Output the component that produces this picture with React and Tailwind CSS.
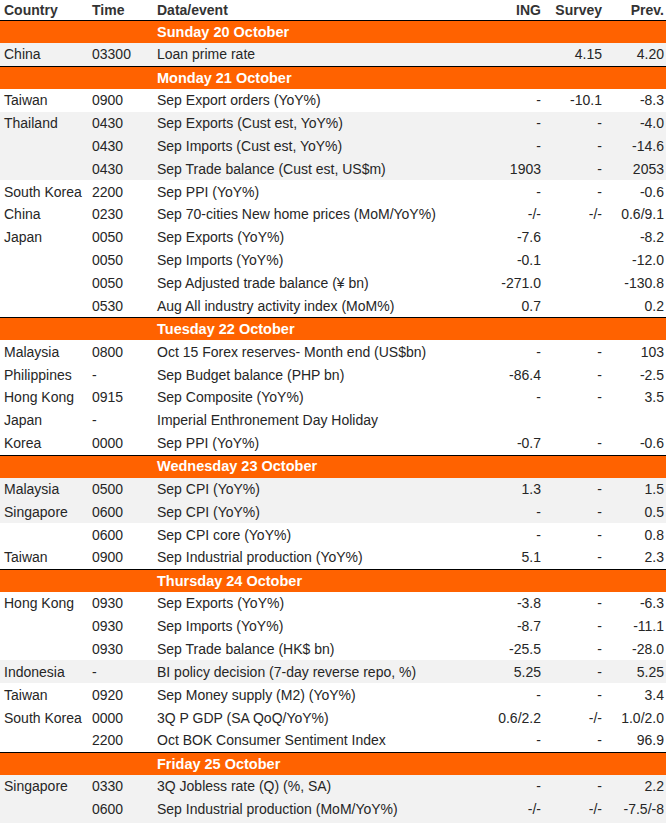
const days = [
  {
    title: "Sunday 20 October",
    rows: [["China", "03300", "Loan prime rate", "", "4.15", "4.20", true]],
  },
  {
    title: "Monday 21 October",
    rows: [
      ["Taiwan", "0900", "Sep Export orders (YoY%)", "-", "-10.1", "-8.3", false],
      ["Thailand", "0430", "Sep Exports (Cust est, YoY%)", "-", "-", "-4.0", true],
      ["", "0430", "Sep Imports (Cust est, YoY%)", "-", "-", "-14.6", true],
      ["", "0430", "Sep Trade balance (Cust est, US$m)", "1903", "-", "2053", true],
      ["South Korea", "2200", "Sep PPI (YoY%)", "-", "-", "-0.6", false],
      ["China", "0230", "Sep 70-cities New home prices (MoM/YoY%)", "-/-", "-/-", "0.6/9.1", false],
      ["Japan", "0050", "Sep Exports (YoY%)", "-7.6", "", "-8.2", false],
      ["", "0050", "Sep Imports (YoY%)", "-0.1", "", "-12.0", false],
      ["", "0050", "Sep Adjusted trade balance (¥ bn)", "-271.0", "", "-130.8", false],
      ["", "0530", "Aug All industry activity index (MoM%)", "0.7", "", "0.2", false],
    ],
  },
  {
    title: "Tuesday 22 October",
    rows: [
      ["Malaysia", "0800", "Oct 15 Forex reserves- Month end (US$bn)", "-", "-", "103", false],
      ["Philippines", "-", "Sep Budget balance (PHP bn)", "-86.4", "-", "-2.5", false],
      ["Hong Kong", "0915", "Sep Composite (YoY%)", "-", "-", "3.5", false],
      ["Japan", "-", "Imperial Enthronement Day Holiday", "", "", "", false],
      ["Korea", "0000", "Sep PPI (YoY%)", "-0.7", "-", "-0.6", false],
    ],
  },
  {
    title: "Wednesday 23 October",
    rows: [
      ["Malaysia", "0500", "Sep CPI (YoY%)", "1.3", "-", "1.5", true],
      ["Singapore", "0600", "Sep CPI (YoY%)", "-", "-", "0.5", true],
      ["", "0600", "Sep CPI core (YoY%)", "-", "-", "0.8", false],
      ["Taiwan", "0900", "Sep Industrial production (YoY%)", "5.1", "-", "2.3", false],
    ],
  },
  {
    title: "Thursday 24 October",
    rows: [
      ["Hong Kong", "0930", "Sep Exports (YoY%)", "-3.8", "-", "-6.3", false],
      ["", "0930", "Sep Imports (YoY%)", "-8.7", "-", "-11.1", false],
      ["", "0930", "Sep Trade balance (HK$ bn)", "-25.5", "-", "-28.0", false],
      ["Indonesia", "-", "BI policy decision (7-day reverse repo, %)", "5.25", "-", "5.25", true],
      ["Taiwan", "0920", "Sep Money supply (M2) (YoY%)", "-", "-", "3.4", false],
      ["South Korea", "0000", "3Q P GDP (SA QoQ/YoY%)", "0.6/2.2", "-/-", "1.0/2.0", false],
      ["", "2200", "Oct BOK Consumer Sentiment Index", "-", "-", "96.9", false],
    ],
  },
  {
    title: "Friday 25 October",
    rows: [
      ["Singapore", "0330", "3Q Jobless rate (Q) (%, SA)", "-", "-", "2.2", true],
      ["", "0600", "Sep Industrial production (MoM/YoY%)", "-/-", "-/-", "-7.5/-8", true],
    ],
  },
];

const cols = "grid grid-cols-[88px_65px_304px_80px_61px_62px] pl-1 pr-[2px]";

export default function App() {
  return (
    <div
      className="w-[666px] h-[823px] flex flex-col bg-white text-[14px] text-[#262626] leading-none"
      style={{ fontFamily: '"Liberation Sans", Arial, sans-serif' }}
    >
      <div className={`${cols} h-[20px] items-center font-bold text-[#333]`}>
        <span>Country</span>
        <span>Time</span>
        <span>Data/event</span>
        <span className="text-right">ING</span>
        <span className="text-right">Survey</span>
        <span className="text-right">Prev.</span>
      </div>

      {days.map((day) => (
        <div key={day.title} className="flex flex-col">
          <div className={`${cols} h-[23px] items-center bg-[#ff6200] border-t-[1.5px] border-black text-white font-bold text-[14.5px]`}>
            <span></span>
            <span></span>
            <span>{day.title}</span>
          </div>
          {day.rows.map((r, i) => (
            <div
              key={i}
              className={`${cols} h-[22.85px] items-center ${r[6] ? "bg-[#f2f2f2]" : "bg-white"}`}
            >
              <span className="whitespace-nowrap">{r[0]}</span>
              <span>{r[1]}</span>
              <span className="whitespace-nowrap">{r[2]}</span>
              <span className="text-right">{r[3]}</span>
              <span className="text-right">{r[4]}</span>
              <span className="text-right">{r[5]}</span>
            </div>
          ))}
        </div>
      ))}
      <div className="flex-1 bg-[#f2f2f2]"></div>
    </div>
  );
}
